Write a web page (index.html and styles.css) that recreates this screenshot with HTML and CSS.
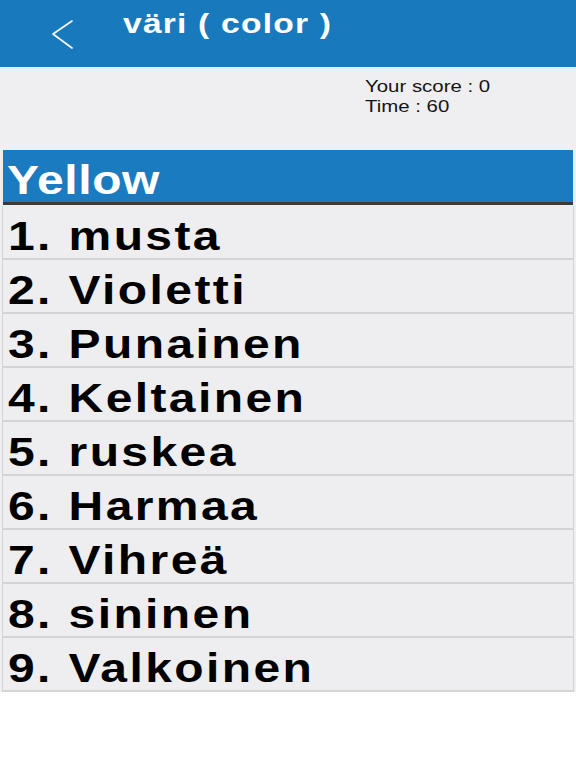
FILE: index.html
```html
<!DOCTYPE html>
<html lang="fi">
<head>
<meta charset="utf-8">
<title>väri ( color )</title>
<link rel="stylesheet" href="styles.css">
</head>
<body>
<header class="topbar">
  <svg class="back" viewBox="0 0 22 30" width="22" height="30" aria-hidden="true">
    <polyline points="20,1 1,14 20,28" fill="none" stroke="#ffffff" stroke-width="1.6" stroke-linecap="round" stroke-linejoin="round"/>
  </svg>
  <h1 class="title"><span class="wide">väri ( color )</span></h1>
</header>
<main class="content">
  <section class="stats">
    <div class="stat"><span class="wide-s">Your score : 0</span></div>
    <div class="stat"><span class="wide-s">Time : 60</span></div>
  </section>
  <div class="prompt"><span class="wide-y">Yellow</span></div>
  <ol class="options">
    <li class="option"><span class="wide-o">1. musta</span></li>
    <li class="option"><span class="wide-o">2. Violetti</span></li>
    <li class="option"><span class="wide-o">3. Punainen</span></li>
    <li class="option"><span class="wide-o">4. Keltainen</span></li>
    <li class="option"><span class="wide-o">5. ruskea</span></li>
    <li class="option"><span class="wide-o">6. Harmaa</span></li>
    <li class="option"><span class="wide-o">7. Vihreä</span></li>
    <li class="option"><span class="wide-o">8. sininen</span></li>
    <li class="option"><span class="wide-o">9. Valkoinen</span></li>
  </ol>
</main>
</body>
</html>
```
FILE: styles.css
```css
html, body {
  margin: 0;
  padding: 0;
  background: #ffffff;
  font-family: "Liberation Sans", Arial, sans-serif;
}

.topbar {
  display: flex;
  align-items: flex-start;
  height: 67px;
  background: #1879bd;
  border-bottom: 2px solid #e4ebf2;
}

.back {
  display: block;
  margin-left: 52px;
  margin-top: 20px;
  flex: none;
}

.title {
  margin: 9px 0 0 49px;
  font-size: 28px;
  line-height: 30px;
  font-weight: bold;
  color: #ffffff;
}

.wide, .wide-s, .wide-y, .wide-o {
  display: inline-block;
  white-space: nowrap;
  transform-origin: 0 50%;
}

.wide {
  transform: scaleX(1.2);
  letter-spacing: 1px;
}

.content {
  background: #efeff1;
  padding: 0 2px;
}

.stats {
  box-sizing: border-box;
  height: 81px;
  padding: 8px 0 0 363px;
  font-size: 17px;
  line-height: 20px;
  color: #151515;
}

.wide-s {
  transform: scaleX(1.2);
}

.prompt {
  height: 48px;
  margin: 0 1px;
  padding: 4px 0 0 4px;
  background: #1a7bc0;
  border-bottom: 3px solid #3a3a3a;
  color: #ffffff;
  font-size: 40px;
  font-weight: bold;
  line-height: 52px;
}

.wide-y {
  transform: scaleX(1.2);
  letter-spacing: 0.5px;
}

.options {
  list-style: none;
  margin: 0;
  padding: 1px 0 0;
}

.option {
  box-sizing: border-box;
  height: 54px;
  padding: 8px 0 0 5px;
  border-left: 1px solid #d3d3d5;
  border-right: 1px solid #d3d3d5;
  border-bottom: 2px solid #d3d3d5;
  background: #eeeef0;
  color: #000000;
  font-size: 40px;
  font-weight: bold;
  line-height: 45px;
}

.wide-o {
  transform: scaleX(1.2);
  letter-spacing: 2px;
}
```
